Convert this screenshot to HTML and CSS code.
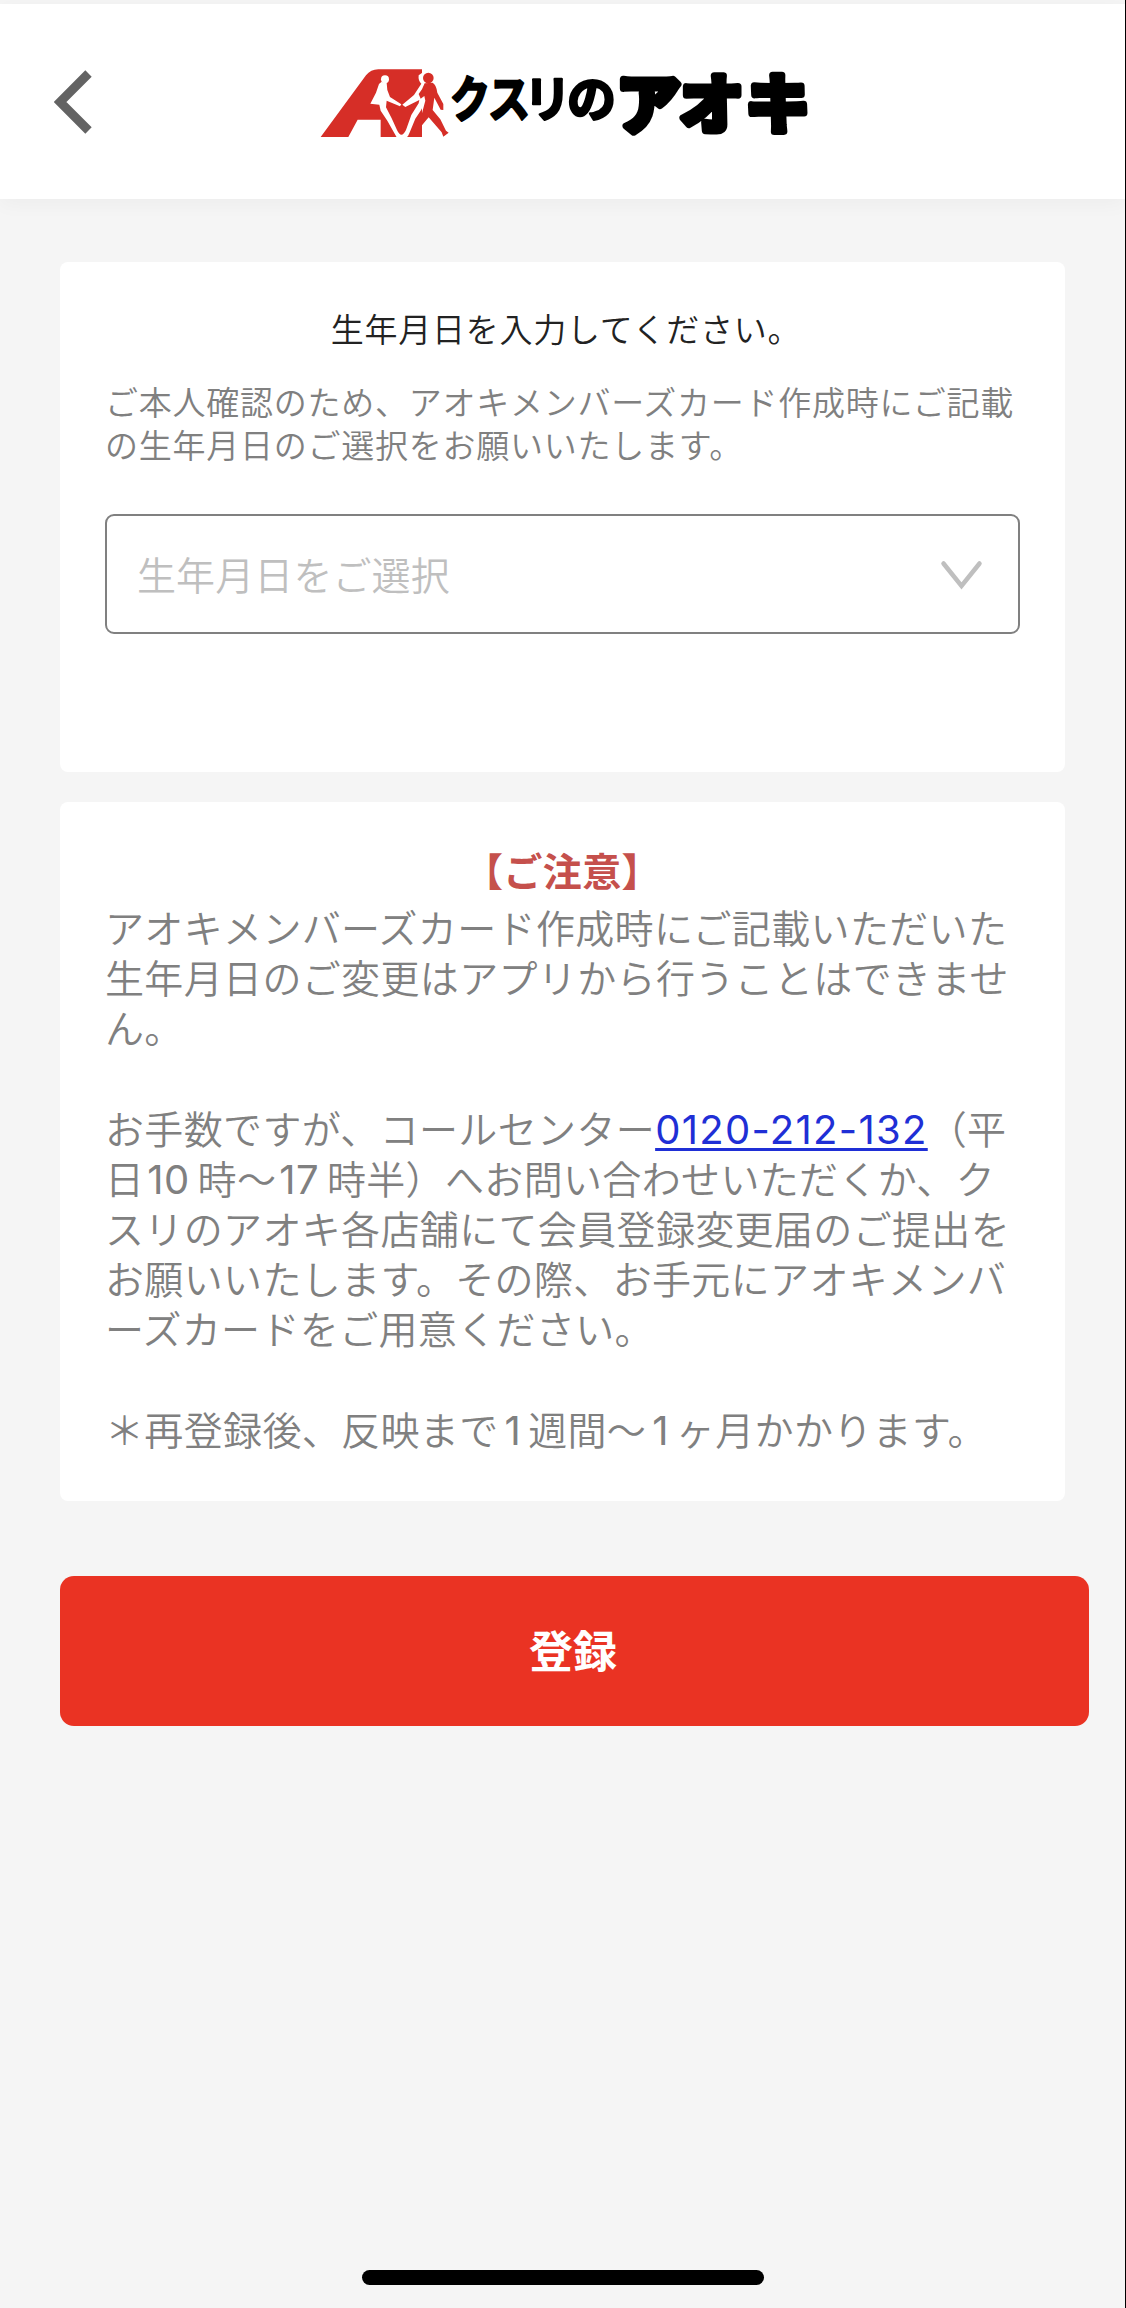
FILE: index.html
```html
<!DOCTYPE html>
<html lang="ja">
<head>
    <meta charset="UTF-8">
    <meta name="viewport" content="width=device-width, initial-scale=1.0">
    <title>生年月日の入力 - クスリのアオキ</title>
    <link rel="stylesheet" href="styles.css">
</head>
<body>
    <div class="page">
        <header class="header">
            <a class="back" href="#" aria-label="戻る">
                <svg width="40" height="64" viewBox="0 0 40 64">
                    <path d="M34.5 3.5 L6 32 L34.5 60.5" fill="none" stroke="#636363" stroke-width="9"/>
                </svg>
            </a>
            <svg class="logo" width="494" height="74" viewBox="318 66 494 74">
                <!-- A mark with the two walking people -->
                <g transform="translate(300 50) scale(0.3333)">
                    <path fill="#d62e27" d="M62 261 L198 76 Q212 58 235 58 H366 V261 H242 V209 H173 L145 261 Z"/>
                    <circle fill="#fff" cx="255" cy="88" r="12"/>
                    <path fill="#fff" d="M244 96 L260 98 L262 120 L270 141 L304 163 L300 169 L260 152 L258 172 L275 205 L291 240 Q304 268 318 240 L334 195 L356 160 L358 150 L316 171 L307 164 L342 135 L364 101 Q354 92 356 76 L370 66 L385 100 L378 152 L362 182 L346 206 L328 250 Q324 261 320 262 L290 262 L262 212 L242 182 L238 164 L211 161 L228 128 L237 102 Z"/>
                    <circle fill="#d62e27" cx="385" cy="84" r="16"/>
                    <path fill="#d62e27" d="M374 100 L398 98 Q409 104 412 128 L430 162 V180 L422 179 L403 143 L398 180 L421 208 L438 242 L446 248 L430 260 L425 247 L386 202 L366 226 L352 240 L366 190 L376 152 L373 138 L362 146 L356 132 L366 118 Z"/>
                </g>
                <g class="logo-text logo-small">
                    <text transform="translate(450 116.500) scale(0.82 1)">ク</text>
                    <text transform="translate(488 116.500) scale(0.86 1)">ス</text>
                    <text transform="translate(524 116.500) scale(0.96 1)">リ</text>
                    <text transform="translate(567 116.500) scale(1 1)">の</text>
                </g>
                <g class="logo-text logo-large">
                    <text transform="translate(616 128)">ア</text>
                    <text transform="translate(679 128)">オ</text>
                    <text transform="translate(746 128) rotate(9 33 -25)">キ</text>
                </g>
            </svg>
        </header>

        <main class="main">
            <section class="card card-input">
                <h1 class="title">生年月日を入力してください。</h1>
                <p class="lead">ご本人確認のため、アオキメンバーズカード作成時にご記載<br>の生年月日のご選択をお願いいたします。</p>
                <div class="select">
                    <span>生年月日をご選択</span>
                    <svg class="chevron" width="43" height="30" viewBox="0 0 43 30">
                        <path d="M3.5 3.5 L21.5 26 L39.5 3.5" fill="none" stroke="#bfbfbf" stroke-width="4.5" stroke-linecap="round"/>
                    </svg>
                </div>
            </section>

            <section class="card card-notice">
                <h2 class="notice-title">【ご注意】</h2>
                <p>アオキメンバーズカード作成時にご記載いただいた<br>生年月日のご変更はアプリから行うことはできませ<br>ん。</p>
                <p>お手数ですが、コールセンター<a class="tel" href="tel:0120-212-132">0120-212-132</a>（平<br>日<span class="num">10</span>時〜<span class="num">17</span>時半）へお問い合わせいただくか、ク<br>スリのアオキ各店舗にて会員登録変更届のご提出を<br>お願いいたします。その際、お手元にアオキメンバ<br>ーズカードをご用意ください。</p>
                <p>＊再登録後、反映まで<span class="one">1</span>週間〜<span class="one">1</span>ヶ月かかります。</p>
            </section>

            <button class="submit" type="button">登録</button>
        </main>

        <div class="home-bar"></div>
    </div>
</body>
</html>
```
FILE: styles.css
```css
* {
    box-sizing: border-box;
    margin: 0;
    padding: 0;
}
body {
    font-family: "Noto Sans CJK JP", sans-serif;
    font-weight: 350;
    background-color: #f5f5f5;
    color: #808080;
}
.page {
    display: flex;
    flex-direction: column;
    height: 2308px;
    border-right: 1px solid #000;
    overflow: hidden;
}
.header {
    display: grid;
    grid-template-columns: 318px 1fr;
    align-items: start;
    height: 195px;
    margin-top: 4px;
    padding-top: 62px;
    background: #fff;
    box-shadow: 0 4px 20px rgba(0,0,0,0.04);
}
.back {
    display: block;
    padding: 4px 0 0 54px;
    line-height: 0;
}
.logo {
    display: block;
    overflow: visible;
}
.logo-text {
    font-weight: 700;
    fill: #000;
    stroke: #000;
    stroke-linejoin: round;
}
.logo-small {
    font-size: 49px;
    stroke-width: 2.5px;
}
.logo-large {
    font-size: 65px;
    stroke-width: 7px;
}
.main {
    display: flex;
    flex-direction: column;
    padding: 63px 35px 0 60px;
}
.card {
    width: 1005px;
    border-radius: 8px;
    background: #fff;
    white-space: nowrap;
}
.card-input {
    height: 510px;
    padding: 45px 45px 0;
}
.title {
    padding-left: 7px;
    font-size: 33px;
    font-weight: 350;
    letter-spacing: 0.75px;
    line-height: 43px;
    color: #222;
    text-align: center;
}
.lead {
    margin-top: 30px;
    font-size: 33px;
    letter-spacing: 0.75px;
    line-height: 43.3px;
}
.select {
    display: flex;
    align-items: center;
    justify-content: space-between;
    height: 120px;
    margin-top: 47px;
    padding: 0 35px 1px 30px;
    border: 2px solid #808080;
    border-radius: 9px;
    font-size: 39px;
    letter-spacing: 0.1px;
    color: #bfbfbf;
}
.chevron {
    margin-top: 4px;
}
.card-notice {
    height: 699px;
    margin-top: 30px;
    padding: 39px 45px 0;
    font-size: 39px;
    letter-spacing: 0.35px;
    line-height: 50.2px;
}
.card-notice p + p {
    margin-top: 50px;
}
.notice-title {
    margin-bottom: 4px;
    font-size: 39px;
    font-weight: 700;
    line-height: 56px;
    color: #c5504c;
    text-align: center;
}
.tel,
.num,
.one {
    font-family: Inter, sans-serif;
    font-size: 40px;
    font-weight: 400;
    line-height: 1;
}
.tel {
    color: #1f2fd6;
    letter-spacing: 1.3px;
    text-decoration-thickness: 3px;
    text-underline-offset: 4px;
}
.num {
    margin: 0 8px 0 3px;
}
.one {
    margin: 0 7px 0 6px;
}
.submit {
    width: 1029px;
    height: 150px;
    margin-top: 75px;
    padding: 0 3px 5px 0;
    border: none;
    border-radius: 14px;
    background: #ea3323;
    color: #fff;
    font-family: inherit;
    font-size: 44px;
    font-weight: 700;
}
.home-bar {
    width: 402px;
    height: 15px;
    margin: auto 0 23px 362px;
    border-radius: 8px;
    background: #000;
}
```
